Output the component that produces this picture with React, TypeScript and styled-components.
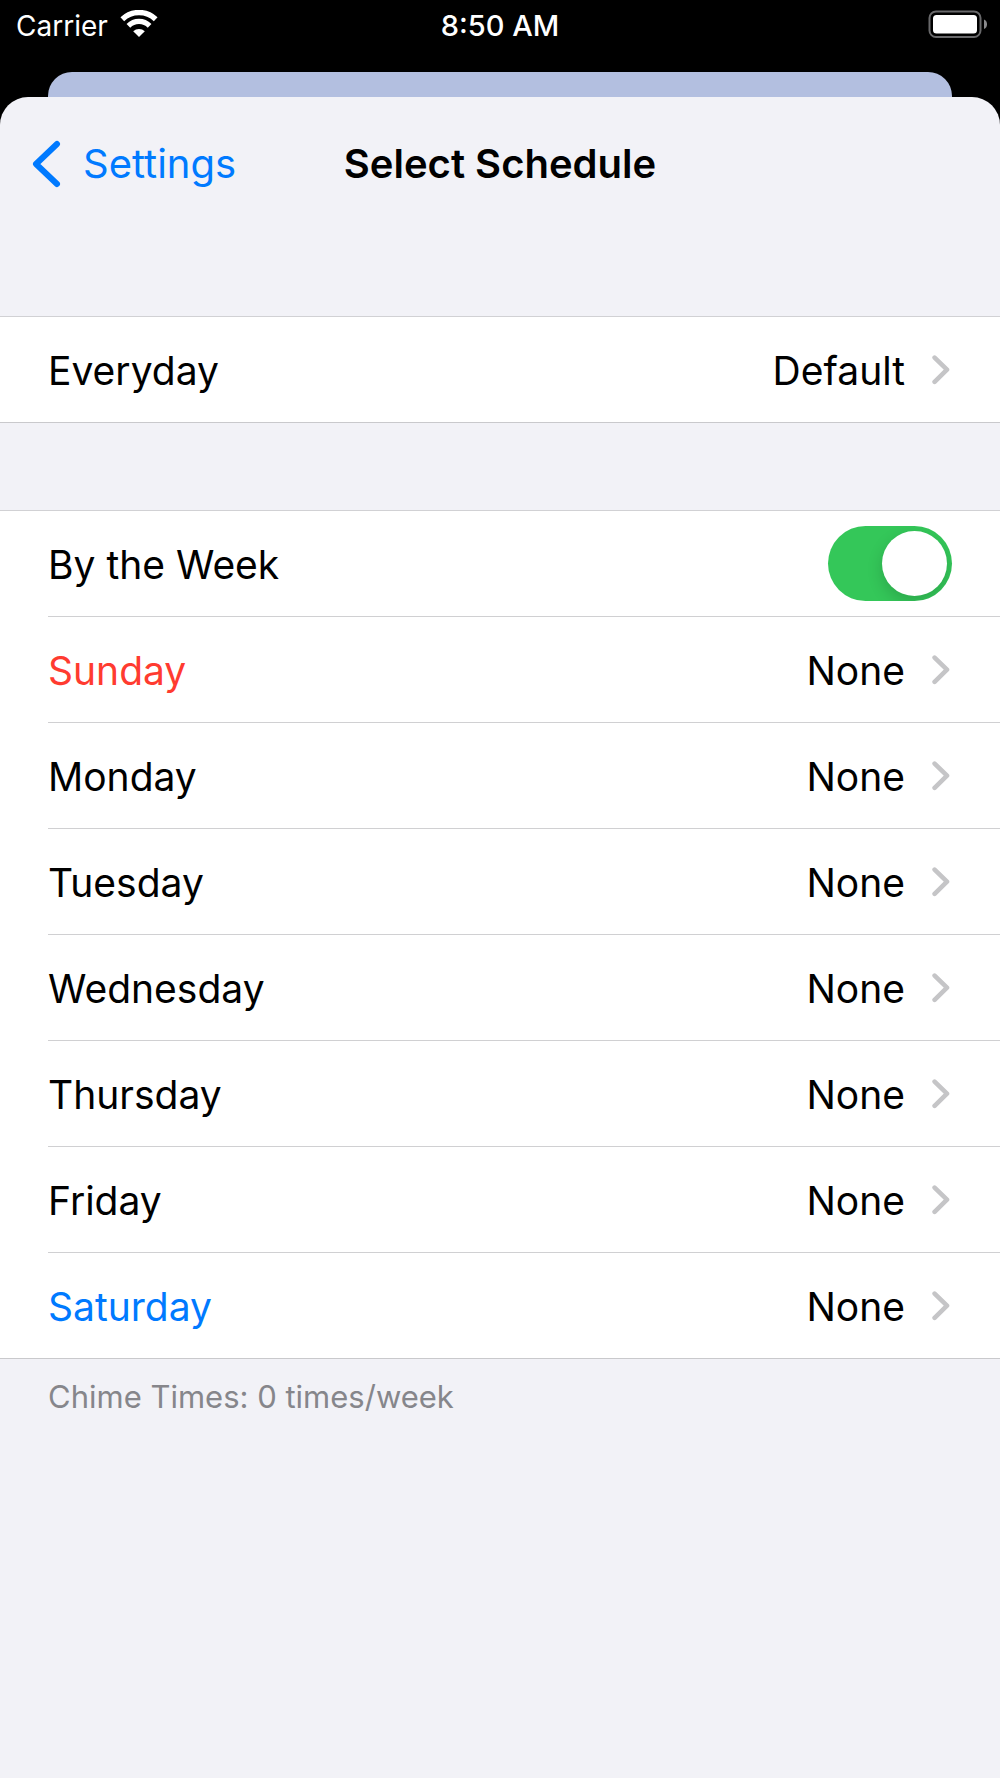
import React, { useState } from "react";
import styled, { createGlobalStyle } from "styled-components";

const GlobalStyle = createGlobalStyle`
  *, *::before { box-sizing: border-box; }
  body {
    margin: 0;
    background: #000;
    color: #000;
    font-family: Inter, "Liberation Sans", sans-serif;
    font-size: 39px;
    line-height: 48px;
  }
`;

const Screen = styled.div`
  display: flex;
  flex-direction: column;
  min-height: 100vh;
`;

const StatusBar = styled.div`
  display: grid;
  grid-template-columns: 1fr auto 1fr;
  align-items: start;
  height: 72px;
  padding: 10px 12px 0;
  color: #fff;
  font-size: 29px;
  line-height: 32px;
`;

const Carrier = styled.div`
  display: flex;
  gap: 12px;
  padding-left: 4px;
  font-size: 28px;
`;

const Clock = styled.time`
  font-weight: 500;
`;

const Battery = styled.svg`
  justify-self: end;
`;

const BackCard = styled.div`
  height: 25px;
  margin: 0 48px;
  border-radius: 24px 24px 0 0;
  background: #b3bfe0;
`;

const Sheet = styled.main`
  flex: 1;
  border-radius: 28px 28px 0 0;
  background: #f2f2f7;
`;

const NavBar = styled.header`
  display: grid;
  grid-template-columns: 1fr auto 1fr;
  align-items: center;
  height: 134px;
  padding: 0 32px;
  font-size: 40px;
`;

const BackButton = styled.button`
  display: flex;
  align-items: center;
  justify-self: start;
  gap: 22px;
  padding: 0;
  border: 0;
  background: none;
  color: #007aff;
  font: inherit;
  cursor: pointer;
`;

const Title = styled.h1`
  margin: 0;
  font-size: 40px;
  font-weight: 600;
`;

const Groups = styled.div`
  display: flex;
  flex-direction: column;
  gap: 87px;
  padding-top: 85px;
`;

const List = styled.ul`
  margin: 0;
  padding: 0;
  list-style: none;
  background: #fff;
  border-top: 1px solid #d1d1d4;
  border-bottom: 1px solid #c9c9cc;
`;

const Item = styled.li`
  padding-left: 48px;

  & + & > * {
    border-top: 1px solid #d0d0d2;
  }
`;

const RowButton = styled.button`
  display: flex;
  align-items: center;
  gap: 27px;
  box-sizing: content-box;
  width: calc(100% - 50px);
  height: 105px;
  padding: 0 50px 0 0;
  border: 0;
  background: none;
  color: #000;
  font: inherit;
  text-align: left;
  cursor: pointer;
`;

const SwitchRow = styled.label`
  display: flex;
  align-items: center;
  justify-content: space-between;
  height: 105px;
  padding-right: 48px;
`;

const Name = styled.span<{ $color?: string }>`
  flex: 1;
  padding-top: 3px;
  color: ${(p) => p.$color ?? "#000"};
`;

const Value = styled.span`
  padding-top: 3px;
`;

const Switch = styled.input`
  display: flex;
  appearance: none;
  width: 124px;
  height: 75px;
  margin: 0;
  padding: 5px;
  border-radius: 38px;
  background: #e9e9eb;
  overflow: hidden;
  cursor: pointer;

  &::before {
    content: "";
    width: 65px;
    height: 65px;
    border-radius: 50%;
    background: #fff;
    box-shadow: 0 6px 16px rgba(0, 0, 0, 0.16);
  }

  &:checked {
    justify-content: flex-end;
    background: #34c759;
  }
`;

const Footnote = styled.p`
  margin: 0;
  padding: 18px 48px;
  color: #86868b;
  font-size: 31px;
  line-height: 40px;
`;

const WifiIcon = () => (
  <svg width="38" height="28" viewBox="0 0 38 28" fill="none" aria-hidden="true">
    <path d="M2.3 9.2a24.2 24.2 0 0 1 33.4 0" stroke="#fff" strokeWidth="5.4" />
    <path d="M8.4 15.8a15 15 0 0 1 21.2 0" stroke="#fff" strokeWidth="5.2" />
    <path d="M13.2 21.2a8.4 8.4 0 0 1 11.6 0L19 27z" fill="#fff" />
  </svg>
);

const BatteryIcon = () => (
  <Battery width="60" height="28" viewBox="0 0 60 28" role="img" aria-label="Battery full">
    <rect x="1.5" y="1.5" width="51" height="25.5" rx="6.5" fill="none" stroke="#69696b" strokeWidth="2" />
    <rect x="5" y="5" width="44" height="18.5" rx="3.5" fill="#fff" />
    <path d="M56 9.5c2 .8 3 2.5 3 4.8s-1 4-3 4.8z" fill="#8a8a8c" />
  </Battery>
);

const BackIcon = () => (
  <svg width="29" height="48" viewBox="0 0 29 48" fill="none" aria-hidden="true">
    <path
      d="M25 4 4 24 25 44"
      stroke="#007aff"
      strokeWidth="6"
      strokeLinecap="round"
      strokeLinejoin="round"
    />
  </svg>
);

const Chevron = () => (
  <svg width="18" height="30" viewBox="0 0 18 30" fill="none" aria-hidden="true">
    <path
      d="M2.6 2.6 15 14.700 2.6 26.800"
      stroke="#c5c5c7"
      strokeWidth="4.6"
      strokeLinecap="round"
      strokeLinejoin="round"
    />
  </svg>
);

const days = [
  { name: "Sunday", color: "#ff3b30" },
  { name: "Monday" },
  { name: "Tuesday" },
  { name: "Wednesday" },
  { name: "Thursday" },
  { name: "Friday" },
  { name: "Saturday", color: "#007aff" },
];

function ScheduleRow({ name, value, color }: { name: string; value: string; color?: string }) {
  return (
    <Item>
      <RowButton type="button">
        <Name $color={color}>{name}</Name>
        <Value>{value}</Value>
        <Chevron />
      </RowButton>
    </Item>
  );
}

export default function App() {
  const [weekly, setWeekly] = useState(true);

  return (
    <Screen>
      <GlobalStyle />
      <StatusBar>
        <Carrier>
          <span>Carrier</span>
          <WifiIcon />
        </Carrier>
        <Clock>8:50 AM</Clock>
        <BatteryIcon />
      </StatusBar>
      <BackCard />
      <Sheet>
        <NavBar>
          <BackButton type="button">
            <BackIcon />
            Settings
          </BackButton>
          <Title>Select Schedule</Title>
        </NavBar>
        <Groups>
          <List>
            <ScheduleRow name="Everyday" value="Default" />
          </List>
          <List>
            <Item>
              <SwitchRow htmlFor="weekly">
                <Name>By the Week</Name>
                <Switch
                  id="weekly"
                  type="checkbox"
                  role="switch"
                  checked={weekly}
                  onChange={(e) => setWeekly(e.target.checked)}
                />
              </SwitchRow>
            </Item>
            {weekly &&
              days.map((day) => (
                <ScheduleRow key={day.name} name={day.name} value="None" color={day.color} />
              ))}
          </List>
        </Groups>
        <Footnote>Chime Times: 0 times/week</Footnote>
      </Sheet>
    </Screen>
  );
}
